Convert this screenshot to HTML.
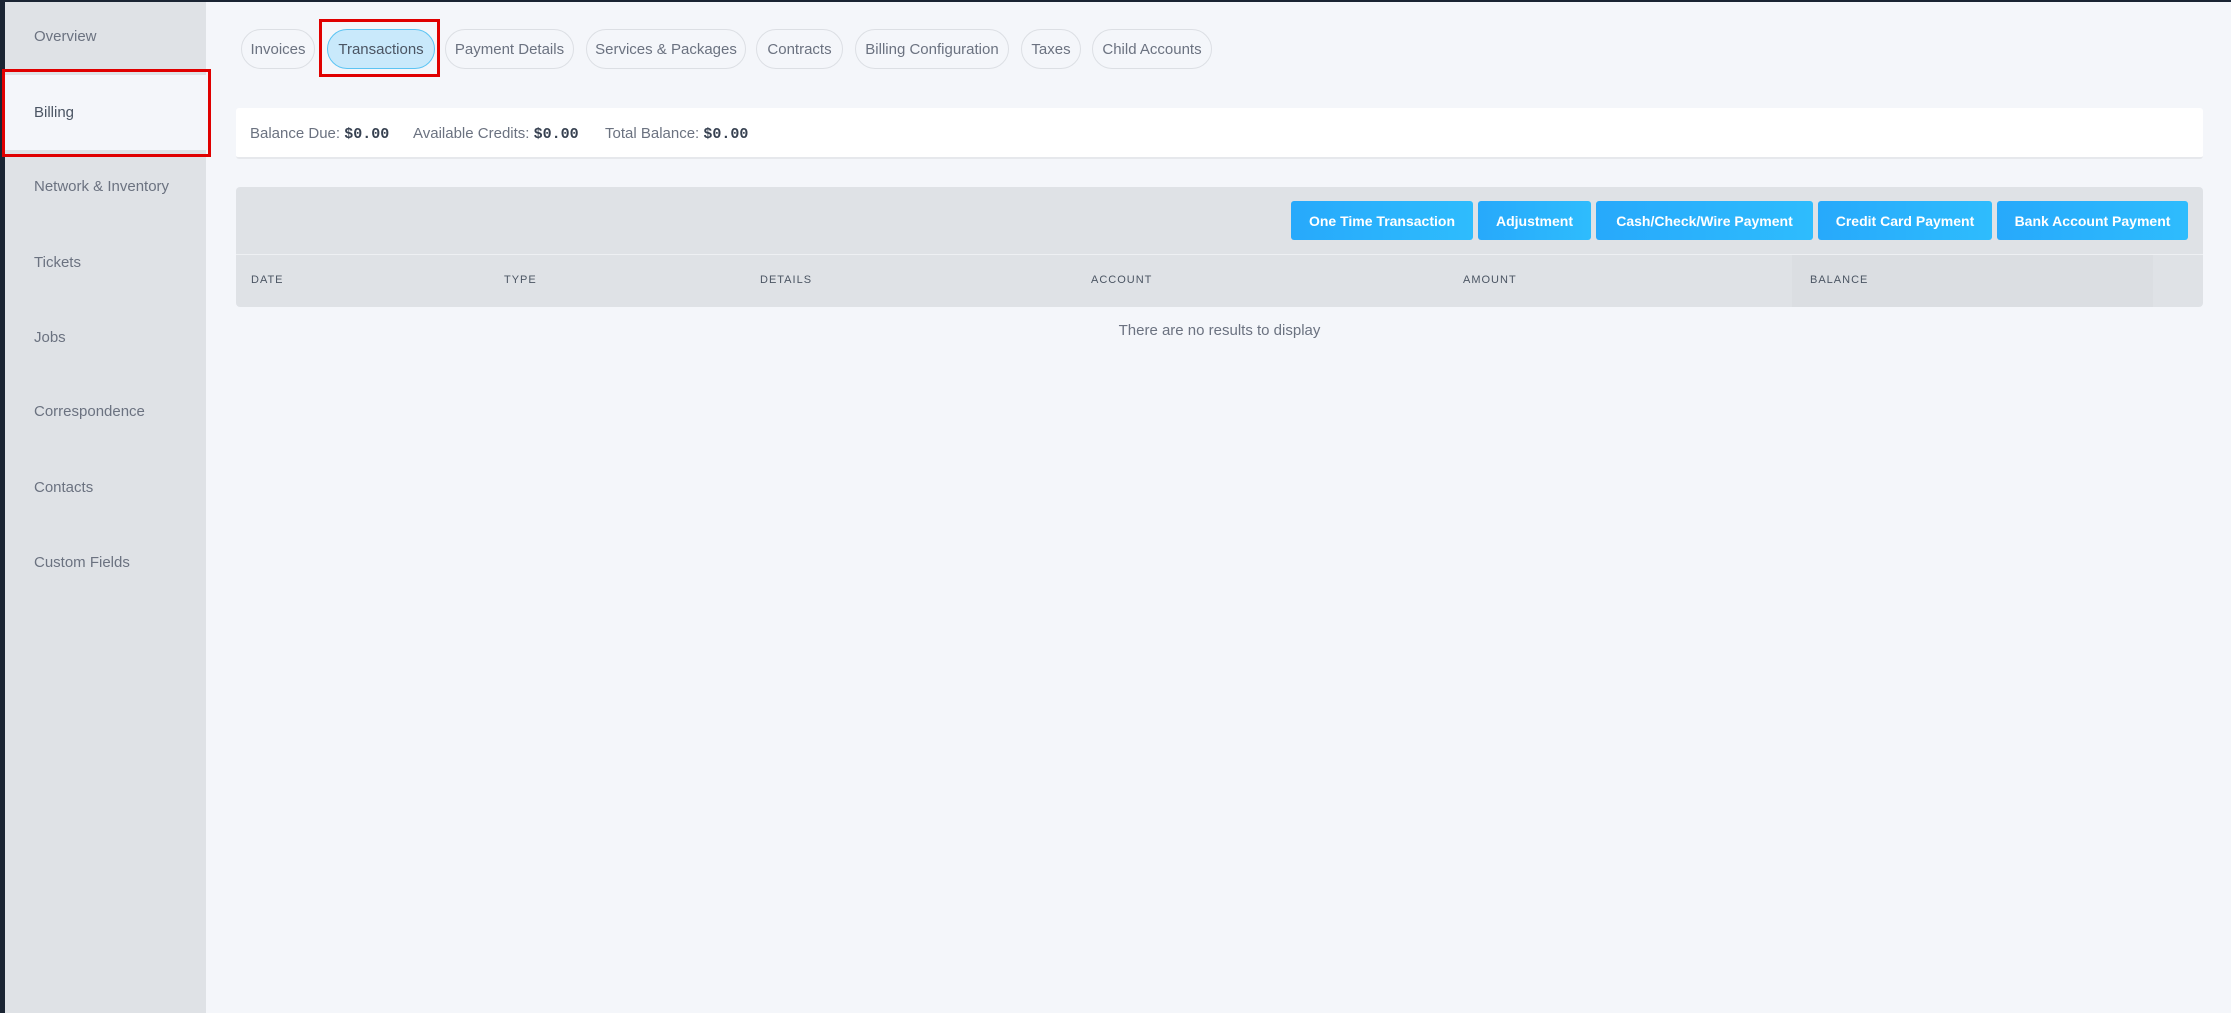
<!DOCTYPE html>
<html><head><meta charset="utf-8"><style>
*{box-sizing:border-box;margin:0;padding:0}
body{width:2231px;height:1013px;background:#f4f6fa;font-family:"Liberation Sans",sans-serif;position:relative;overflow:hidden;color:#6b7280}
.a{position:absolute}
.side{left:0;top:0;width:206px;height:1013px;background:#dfe2e6;border-left:5px solid #1a2433;border-top:2px solid #1a2433}
.top{left:0;top:0;width:2231px;height:2px;background:#1a2433}
.si{position:absolute;left:34px;font-size:15px;color:#6b7280}
.tab{position:absolute;top:29px;height:40px;border:1.5px solid #dcdfe4;border-radius:20px;font-size:15px;color:#6b7280;display:flex;align-items:center;justify-content:center;background:#f4f6fa}
.btn{position:absolute;top:201px;height:39px;background:linear-gradient(90deg,#27a9fb,#2ebcfd);border-radius:3px;color:#fff;font-weight:bold;font-size:14px;display:flex;align-items:center;justify-content:center}
.th{position:absolute;top:274px;font-size:11px;letter-spacing:1px;color:#4b5563}
.red{position:absolute;border:3px solid #e00000}
.m{font-family:'Liberation Mono',monospace;color:#374151;font-weight:bold}
</style></head><body>
<div class="a side"></div>
<div class="a top"></div>
<div class="a" style="left:5px;top:75px;width:201px;height:75px;background:#f4f6fa"></div>
<div class="si" style="top:28px">Overview</div>
<div class="si" style="top:104px;color:#4b5563">Billing</div>
<div class="si" style="top:178px">Network &amp; Inventory</div>
<div class="si" style="top:254px">Tickets</div>
<div class="si" style="top:329px">Jobs</div>
<div class="si" style="top:403px">Correspondence</div>
<div class="si" style="top:479px">Contacts</div>
<div class="si" style="top:554px">Custom Fields</div>
<div class="red" style="left:2px;top:69px;width:209px;height:88px"></div>

<div class="tab" style="left:241px;width:74px">Invoices</div>
<div class="tab" style="left:327px;width:108px;background:#c9e9fb;border-color:#5cc4f3;color:#4b5563">Transactions</div>
<div class="tab" style="left:445px;width:129px">Payment Details</div>
<div class="tab" style="left:586px;width:160px">Services &amp; Packages</div>
<div class="tab" style="left:756px;width:87px">Contracts</div>
<div class="tab" style="left:855px;width:154px">Billing Configuration</div>
<div class="tab" style="left:1021px;width:60px">Taxes</div>
<div class="tab" style="left:1092px;width:120px">Child Accounts</div>
<div class="red" style="left:319px;top:19px;width:121px;height:58px"></div>

<div class="a" style="left:236px;top:108px;width:1967px;height:51px;background:#fff;border-bottom:2px solid #e6e8ec;border-radius:3px"></div>
<div class="a" style="left:250px;top:125px;font-size:15px">Balance Due: <span class="m">$0.00</span></div>
<div class="a" style="left:413px;top:125px;font-size:15px">Available Credits: <span class="m">$0.00</span></div>
<div class="a" style="left:605px;top:125px;font-size:15px">Total Balance: <span class="m">$0.00</span></div>

<div class="a" style="left:236px;top:187px;width:1967px;height:120px;background:#dfe2e6;border-radius:4px"></div>
<div class="a" style="left:236px;top:254px;width:1967px;height:1px;background:#eef0f3"></div>
<div class="a" style="left:1792px;top:255px;width:361px;height:52px;background:#dbdee2"></div>
<div class="btn" style="left:1291px;width:182px">One Time Transaction</div>
<div class="btn" style="left:1478px;width:113px">Adjustment</div>
<div class="btn" style="left:1596px;width:217px">Cash/Check/Wire Payment</div>
<div class="btn" style="left:1818px;width:174px">Credit Card Payment</div>
<div class="btn" style="left:1997px;width:191px">Bank Account Payment</div>
<div class="th" style="left:251px">DATE</div>
<div class="th" style="left:504px">TYPE</div>
<div class="th" style="left:760px">DETAILS</div>
<div class="th" style="left:1091px">ACCOUNT</div>
<div class="th" style="left:1463px">AMOUNT</div>
<div class="th" style="left:1810px">BALANCE</div>
<div class="a" style="left:236px;top:322px;width:1967px;text-align:center;font-size:15px">There are no results to display</div>
</body></html>
